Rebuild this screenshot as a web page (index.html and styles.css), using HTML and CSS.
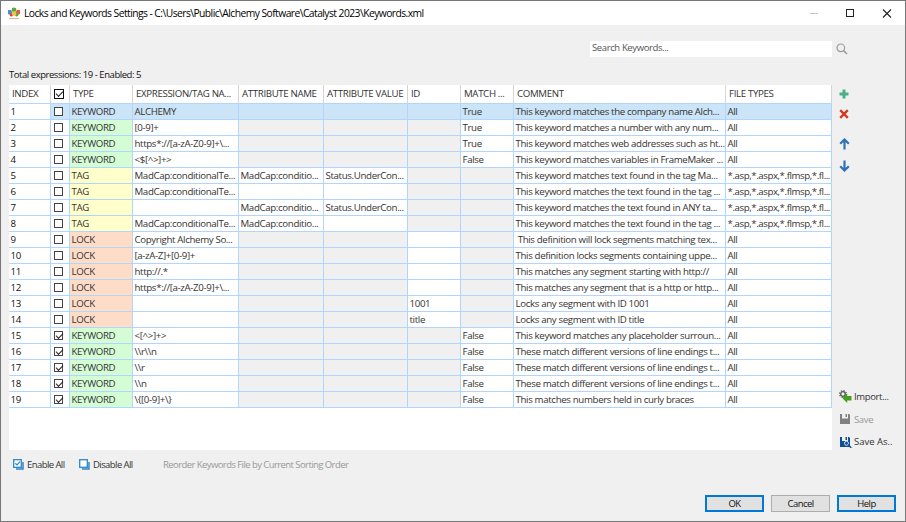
FILE: index.html
```html
<!DOCTYPE html>
<html>
<head>
<meta charset="utf-8">
<title>Locks and Keywords Settings</title>
<link rel="stylesheet" href="styles.css">
</head>

<body>
<div class="window">
	<div class="titlebar">
		<svg class="logo" width="14" height="13" viewBox="0 0 14 13">
			<path d="M1 3l3 0 2 3-2 2-3-1z" fill="#4a8fd0"/>
			<path d="M13 3l-3 0-2 3 2 2 3-1z" fill="#e0603c"/>
			<circle cx="7" cy="2.800" r="2.400" fill="#5aa845"/>
			<circle cx="4.300" cy="7.800" r="1.700" fill="#d9483b"/>
			<circle cx="9.700" cy="7.800" r="1.700" fill="#5aa845"/>
			<circle cx="7" cy="6.500" r="2.300" fill="#f2c53d"/>
			<path d="M2 11.500h10" stroke="#f3b08c"/>
		</svg>
		<h1>Locks and Keywords Settings - C:\Users\Public\Alchemy Software\Catalyst 2023\Keywords.xml</h1>
		<svg class="controls" width="84" height="11" viewBox="0 0 84 11">
			<path d="M1 5.500h8" stroke="#c4c4c4"/>
			<rect x="37.500" y="1.500" width="7" height="7" fill="none" stroke="#222"/>
			<path d="M74 1.500l8 8M82 1.500l-8 8" stroke="#222" stroke-width="1.100"/>
		</svg>
	</div>

	<div class="search">
		<div class="search-input">Search Keywords...</div>
		<svg width="12" height="12" viewBox="0 0 12 12">
			<circle cx="4.800" cy="4.800" r="3.800" fill="none" stroke="#9a9a9a" stroke-width="1.200"/>
			<path d="M7.600 7.600l3.400 3.400" stroke="#9a9a9a" stroke-width="1.500"/>
		</svg>
	</div>

	<p class="total">Total expressions: 19 - Enabled: 5</p>

	<div class="main">
		<div class="list">
			<table>
				<colgroup>
					<col class="c-index"><col class="c-check"><col class="c-type"><col class="c-expr"><col class="c-name">
					<col class="c-value"><col class="c-id"><col class="c-match"><col class="c-comment"><col class="c-files">
				</colgroup>
				<tr class="head"><th>INDEX</th><th><i class="box on"></i></th><th>TYPE</th><th>EXPRESSION/TAG NA...</th><th>ATTRIBUTE NAME</th><th>ATTRIBUTE VALUE</th><th>ID</th><th>MATCH ...</th><th>COMMENT</th><th>FILE TYPES</th></tr>
				<tr class="selected"><td>1</td><td><i class="box"></i></td><td>KEYWORD</td><td>ALCHEMY</td><td></td><td></td><td></td><td>True</td><td>This keyword matches the company name Alch...</td><td>All</td></tr>
				<tr><td>2</td><td><i class="box"></i></td><td class="keyword">KEYWORD</td><td>[0-9]+</td><td class="off"></td><td class="off"></td><td class="off"></td><td>True</td><td>This keyword matches a number with any num...</td><td>All</td></tr>
				<tr><td>3</td><td><i class="box"></i></td><td class="keyword">KEYWORD</td><td>https*://[a-zA-Z0-9]+\...</td><td class="off"></td><td class="off"></td><td class="off"></td><td>True</td><td>This keyword matches web addresses such as ht...</td><td>All</td></tr>
				<tr><td>4</td><td><i class="box"></i></td><td class="keyword">KEYWORD</td><td>&lt;$[^&gt;]+&gt;</td><td class="off"></td><td class="off"></td><td class="off"></td><td>False</td><td>This keyword matches variables in FrameMaker ...</td><td>All</td></tr>
				<tr><td>5</td><td><i class="box"></i></td><td class="tag">TAG</td><td>MadCap:conditionalTe...</td><td>MadCap:conditio...</td><td>Status.UnderCon...</td><td class="off"></td><td class="off"></td><td>This keyword matches text found in the tag Ma...</td><td class="ext">*.asp,*.aspx,*.flmsp,*.fl...</td></tr>
				<tr><td>6</td><td><i class="box"></i></td><td class="tag">TAG</td><td>MadCap:conditionalTe...</td><td></td><td></td><td class="off"></td><td class="off"></td><td>This keyword matches the text found in the tag ...</td><td class="ext">*.asp,*.aspx,*.flmsp,*.fl...</td></tr>
				<tr><td>7</td><td><i class="box"></i></td><td class="tag">TAG</td><td></td><td>MadCap:conditio...</td><td>Status.UnderCon...</td><td class="off"></td><td class="off"></td><td>This keyword matches the text found in ANY ta...</td><td class="ext">*.asp,*.aspx,*.flmsp,*.fl...</td></tr>
				<tr><td>8</td><td><i class="box"></i></td><td class="tag">TAG</td><td>MadCap:conditionalTe...</td><td>MadCap:conditio...</td><td></td><td class="off"></td><td class="off"></td><td>This keyword matches the text found in the tag ...</td><td class="ext">*.asp,*.aspx,*.flmsp,*.fl...</td></tr>
				<tr><td>9</td><td><i class="box"></i></td><td class="lock">LOCK</td><td>Copyright Alchemy So...</td><td class="off"></td><td class="off"></td><td></td><td class="off"></td><td>&nbsp;This definition will lock segments matching tex...</td><td>All</td></tr>
				<tr><td>10</td><td><i class="box"></i></td><td class="lock">LOCK</td><td>[a-zA-Z]+[0-9]+</td><td class="off"></td><td class="off"></td><td></td><td class="off"></td><td>This definition locks segments containing uppe...</td><td>All</td></tr>
				<tr><td>11</td><td><i class="box"></i></td><td class="lock">LOCK</td><td>http://.*</td><td class="off"></td><td class="off"></td><td></td><td class="off"></td><td>This matches any segment starting with http://</td><td>All</td></tr>
				<tr><td>12</td><td><i class="box"></i></td><td class="lock">LOCK</td><td>https*://[a-zA-Z0-9]+\...</td><td class="off"></td><td class="off"></td><td></td><td class="off"></td><td>This matches any segment that is a http or http...</td><td>All</td></tr>
				<tr><td>13</td><td><i class="box"></i></td><td class="lock">LOCK</td><td></td><td class="off"></td><td class="off"></td><td>1001</td><td class="off"></td><td>Locks any segment with ID 1001</td><td>All</td></tr>
				<tr><td>14</td><td><i class="box"></i></td><td class="lock">LOCK</td><td></td><td class="off"></td><td class="off"></td><td>title</td><td class="off"></td><td>Locks any segment with ID title</td><td>All</td></tr>
				<tr><td>15</td><td><i class="box on"></i></td><td class="keyword">KEYWORD</td><td>&lt;[^&gt;]+&gt;</td><td class="off"></td><td class="off"></td><td class="off"></td><td>False</td><td>This keyword matches any placeholder surroun...</td><td>All</td></tr>
				<tr><td>16</td><td><i class="box on"></i></td><td class="keyword">KEYWORD</td><td>\\r\\n</td><td class="off"></td><td class="off"></td><td class="off"></td><td>False</td><td>These match different versions of line endings t...</td><td>All</td></tr>
				<tr><td>17</td><td><i class="box on"></i></td><td class="keyword">KEYWORD</td><td>\\r</td><td class="off"></td><td class="off"></td><td class="off"></td><td>False</td><td>These match different versions of line endings t...</td><td>All</td></tr>
				<tr><td>18</td><td><i class="box on"></i></td><td class="keyword">KEYWORD</td><td>\\n</td><td class="off"></td><td class="off"></td><td class="off"></td><td>False</td><td>These match different versions of line endings t...</td><td>All</td></tr>
				<tr><td>19</td><td><i class="box on"></i></td><td class="keyword">KEYWORD</td><td>\{[0-9]+\}</td><td class="off"></td><td class="off"></td><td class="off"></td><td>False</td><td>This matches numbers held in curly braces</td><td>All</td></tr>
			</table>
		</div>

		<div class="side">
			<div class="tools">
				<svg width="10" height="10" viewBox="0 0 10 10"><path d="M5 .5v9M.5 5h9" stroke="#4caf85" stroke-width="3"/></svg>
				<svg width="10" height="10" viewBox="0 0 10 10"><path d="M1.200 1.200l7.600 7.600M8.800 1.200l-7.600 7.600" stroke="#d23b20" stroke-width="2.400"/></svg>
				<svg class="up" width="11" height="12" viewBox="0 0 11 12"><path d="M5.500 11.500v-10M1.200 5.800l4.300-4.300 4.300 4.300" fill="none" stroke="#2f72b8" stroke-width="2.200"/></svg>
				<svg width="11" height="12" viewBox="0 0 11 12"><path d="M5.500 .5v10M1.200 6.200l4.300 4.300 4.300-4.300" fill="none" stroke="#2f72b8" stroke-width="2.200"/></svg>
			</div>
			<div class="files">
				<div class="action">
					<svg width="13" height="13" viewBox="0 0 13 13">
						<circle cx="4" cy="4" r="2.300" fill="none" stroke="#555" stroke-width="1.300"/>
						<circle cx="4" cy="4" r="3.400" fill="none" stroke="#555" stroke-width="1.200" stroke-dasharray="1.300 1.370"/>
						<path d="M3.500 8.200l4.700-4.700v2.500h4.300v4.400h-4.300v2.500z" fill="#43a01c"/>
					</svg>
					<span>Import...</span>
				</div>
				<div class="action disabled">
					<svg width="13" height="12" viewBox="0 0 13 12">
						<path d="M1 1h2v4.500h6V1h1l1 1v9H1z" fill="#808080"/>
						<path d="M6.500 1h1.500v3h-1.500z" fill="#808080"/>
					</svg>
					<span>Save</span>
				</div>
				<div class="action">
					<svg width="13" height="12" viewBox="0 0 13 12">
						<path d="M1 1h2v4h6V1h1l1 1v9H1z" fill="#0f4d9c"/>
						<path d="M6.500 1h1.500v3h-1.500z" fill="#0f4d9c"/>
						<circle cx="7.500" cy="7.300" r="2" fill="#0f4d9c" stroke="#f0f0f0" stroke-width=".9"/>
						<path d="M9 8.800l3.300 3" stroke="#0f4d9c" stroke-width="1.500"/>
					</svg>
					<span class="save-as">Save As..</span>
				</div>
			</div>
		</div>
	</div>

	<div class="bulk">
		<div class="bulk-item enable">
			<svg width="11" height="11" viewBox="0 0 11 11">
				<path d="M3 10h7V3" fill="none" stroke="#2e86c9" stroke-width="1.500"/>
				<rect x=".7" y=".7" width="7.600" height="7.600" fill="#fff" stroke="#2e86c9" stroke-width="1.300"/>
				<path d="M2.300 4.300l1.700 1.700 3-3.300" fill="none" stroke="#2e86c9" stroke-width="1.200"/>
			</svg>
			<span>Enable All</span>
		</div>
		<div class="bulk-item disable">
			<svg width="11" height="11" viewBox="0 0 11 11">
				<path d="M3 10h7V3" fill="none" stroke="#2e86c9" stroke-width="1.500"/>
				<rect x=".7" y=".7" width="7.600" height="7.600" fill="#fff" stroke="#2e86c9" stroke-width="1.300"/>
			</svg>
			<span>Disable All</span>
		</div>
		<span class="reorder">Reorder Keywords File by Current Sorting Order</span>
	</div>

	<div class="buttons">
		<div class="btn primary">OK</div>
		<div class="btn">Cancel</div>
		<div class="btn primary">Help</div>
	</div>
</div>
</body>
</html>
```
FILE: styles.css
```css
*{
	box-sizing: border-box;
}
body{
	margin: 0;
	font-family: "Open Sans", "Noto Sans", sans-serif;
	font-size: 9.5px;
	letter-spacing: -0.57px;
	color: #333;
}
svg{
	display: block;
	flex: none;
}
.window{
	width: 906px;
	height: 522px;
	border: 1px solid #777;
	background: #f0f0f0;
	white-space: nowrap;
	overflow: hidden;
}
.titlebar{
	display: flex;
	align-items: center;
	height: 24px;
	padding: 0 12px 0 6px;
	background: #fff;
}
.titlebar h1{
	flex: 1;
	margin: 0 0 0 3px;
	font-size: 10.3px;
	font-weight: 400;
	letter-spacing: -0.55px;
	color: #000;
}
.search{
	display: flex;
	align-items: center;
	margin: 16px 0 0 589px;
	height: 16px;
}
.search-input{
	width: 242px;
	height: 16px;
	padding-left: 2px;
	line-height: 13px;
	letter-spacing: -0.38px;
	background: #fff;
	color: #555;
}
.search svg{
	margin-left: 4px;
}
.total{
	margin: 10px 0 0 8px;
	height: 18px;
	line-height: 16px;
	letter-spacing: -0.45px;
	color: #111;
}
.main{
	display: flex;
	height: 365px;
	padding-left: 8px;
}
.list{
	width: 823px;
	background: #fff;
}
table{
	width: 823px;
	table-layout: fixed;
	border-collapse: separate;
	border-spacing: 0;
	font-size: 9.7px;
	letter-spacing: -0.35px;
}
.c-index{ width: 42px; }
.c-check{ width: 19px; }
.c-type{ width: 63px; }
.c-expr{ width: 106px; }
.c-name{ width: 85px; }
.c-value{ width: 84px; }
.c-id{ width: 53px; }
.c-match{ width: 53px; }
.c-comment{ width: 212px; }
.c-files{ width: 106px; }
th, td{
	height: 16px;
	padding: 0 0 0 1.5px;
	border-right: 1px solid #b0d6fc;
	border-bottom: 1px solid #b0d6fc;
	line-height: 15px;
	text-align: left;
	font-weight: 400;
	overflow: hidden;
}
th{
	height: 19px;
	padding-left: 3px;
	border-right-color: #d5d5d5;
	line-height: 18px;
}
td:first-child{
	color: #111;
}
.selected td{
	background: #cce4f7;
}
.selected td:first-child{
	background: #fff;
}
.keyword{ background: #d5fdd5; }
.tag{ background: #ffffcc; }
.lock{ background: #ffdcc8; }
.off{ background: #f0f0f0; }
.ext{ letter-spacing: -0.43px; }
.box{
	display: block;
	width: 9px;
	height: 9px;
	margin-left: 1px;
	border: 1px solid #444;
	background: #fff;
}
.box.on:before{
	content: "";
	display: block;
	width: 6px;
	height: 3px;
	margin: 1px 0 0 1px;
	border-left: 1.5px solid #222;
	border-bottom: 1.5px solid #222;
	transform: rotate(-45deg);
}
th .box{
	width: 10px;
	height: 10px;
	margin-left: 0;
	border-color: #111;
}
.side{
	display: flex;
	flex-direction: column;
	justify-content: space-between;
	padding: 4px 0 0 7px;
}
.tools{
	display: flex;
	flex-direction: column;
	gap: 10px;
}
.tools .up{
	margin-top: 9px;
}
.files{
	margin-bottom: -3px;
	letter-spacing: -0.35px;
}
.action{
	display: flex;
	align-items: center;
	height: 22.5px;
}
.action span{
	margin-left: 2px;
}
.action .save-as{
	letter-spacing: 0;
}
.disabled{
	color: #999;
}
.bulk{
	display: flex;
	height: 28px;
	align-items: center;
	padding: 0 0 0 12px;
}
.bulk-item{
	display: flex;
	align-items: center;
	gap: 3px;
}
.enable{ width: 66px; }
.disable{ width: 84px; }
.reorder{
	color: #999;
}
.buttons{
	display: flex;
	justify-content: flex-end;
	gap: 7px;
	margin-top: 17px;
	padding-right: 9px;
}
.btn{
	width: 59px;
	height: 17px;
	border: 1px solid #adadad;
	background: #e1e1e1;
	line-height: 15px;
	text-align: center;
	color: #111;
}
.primary{
	border: 2px solid #0078d7;
	line-height: 13px;
}
```
